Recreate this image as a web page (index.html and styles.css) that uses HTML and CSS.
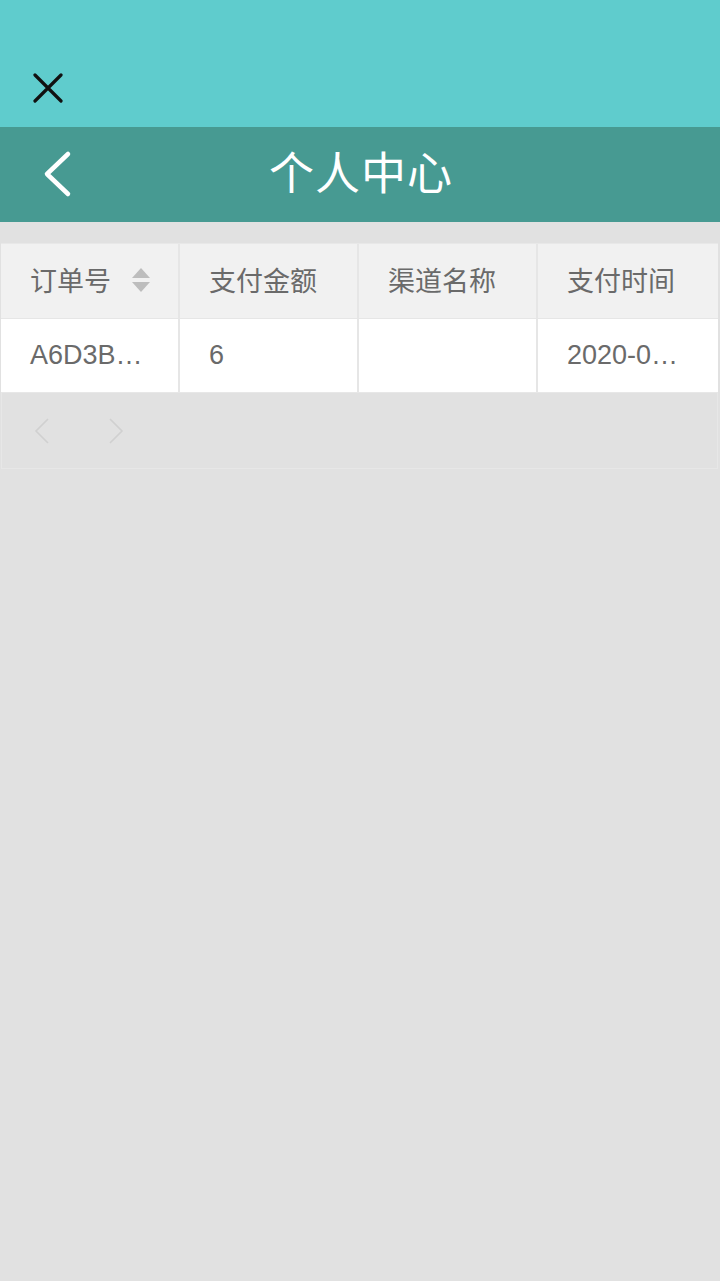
FILE: index.html
```html
<!DOCTYPE html>
<html lang="zh">
<head>
<meta charset="utf-8">
<link rel="stylesheet" href="styles.css">
</head>
<body>
<div class="status">
  <svg class="close" width="30" height="30" viewBox="0 0 30 30"><path d="M2 2L28 28M28 2L2 28" stroke="#111" stroke-width="3.2" stroke-linecap="round" fill="none"/></svg>
</div>
<header class="nav">
  <svg class="back" width="34" height="50" viewBox="0 0 34 50"><path d="M28 5L7 25L28 45" stroke="#fff" stroke-width="4.5" stroke-linecap="round" stroke-linejoin="round" fill="none"/></svg>
  <h1 class="title">个人中心</h1>
</header>
<main class="content">
  <div class="table">
    <div class="cell head">订单号
      <svg class="sort" width="20" height="26" viewBox="0 0 20 26"><path d="M10 1L19 11H1Z" fill="#bdbdbd"/><path d="M10 25L19 15H1Z" fill="#bdbdbd"/></svg>
    </div>
    <div class="cell head">支付金额</div>
    <div class="cell head">渠道名称</div>
    <div class="cell head">支付时间</div>
    <div class="cell body">A6D3B…</div>
    <div class="cell body">6</div>
    <div class="cell body"></div>
    <div class="cell body">2020-0…</div>
  </div>
  <div class="pager">
    <svg width="16" height="26" viewBox="0 0 16 26"><path d="M14 1L2 13L14 25" stroke="#d0d0d0" stroke-width="1.6" fill="none"/></svg>
    <svg width="16" height="26" viewBox="0 0 16 26"><path d="M2 1L14 13L2 25" stroke="#d0d0d0" stroke-width="1.6" fill="none"/></svg>
  </div>
</main>
</body>
</html>
```
FILE: styles.css
```css
html, body {
  margin: 0;
  padding: 0;
}
body {
  width: 720px;
  height: 1281px;
  background: #e1e1e1;
  font-family: "Noto Sans CJK SC", "Liberation Sans", sans-serif;
  overflow: hidden;
}
.status {
  height: 127px;
  background: #5fcccd;
  display: flex;
  align-items: flex-end;
  padding-left: 33px;
  padding-bottom: 24px;
  box-sizing: border-box;
}
.nav {
  height: 95px;
  background: #479a92;
  display: flex;
  align-items: center;
  justify-content: center;
  position: relative;
  padding-bottom: 8px;
  box-sizing: border-box;
}
.back {
  position: absolute;
  left: 40px;
  top: 22px;
}
.title {
  margin: 0;
  font-weight: normal;
  color: #fff;
  font-size: 45px;
  letter-spacing: 1px;
  line-height: 1;
  margin-left: 2px;
}
.content {
  padding: 21px 2px 0 1px;
}
.table {
  display: grid;
  grid-template-columns: 177px 177px 177px 180px;
  column-gap: 2px;
  row-gap: 1px;
  background: #e6e6e6;
  border-top: 1px solid #e8e8e8;
}
.cell {
  display: flex;
  align-items: center;
  padding-left: 29px;
  padding-bottom: 4px;
  font-family: "Liberation Sans", "Noto Sans CJK SC", sans-serif;
  font-size: 27px;
  color: #6a6a6a;
  box-sizing: border-box;
}
.head {
  height: 74px;
  background: #f1f1f1;
}
.body {
  height: 73px;
  background: #fff;
  padding-bottom: 0;
}
.sort {
  margin-left: 20px;
  margin-top: 2px;
}
.pager {
  height: 77px;
  border: 1px solid #e7e7e7;
  background: #e1e1e1;
  display: flex;
  align-items: center;
  gap: 58px;
  padding-left: 32px;
  box-sizing: border-box;
}
```
